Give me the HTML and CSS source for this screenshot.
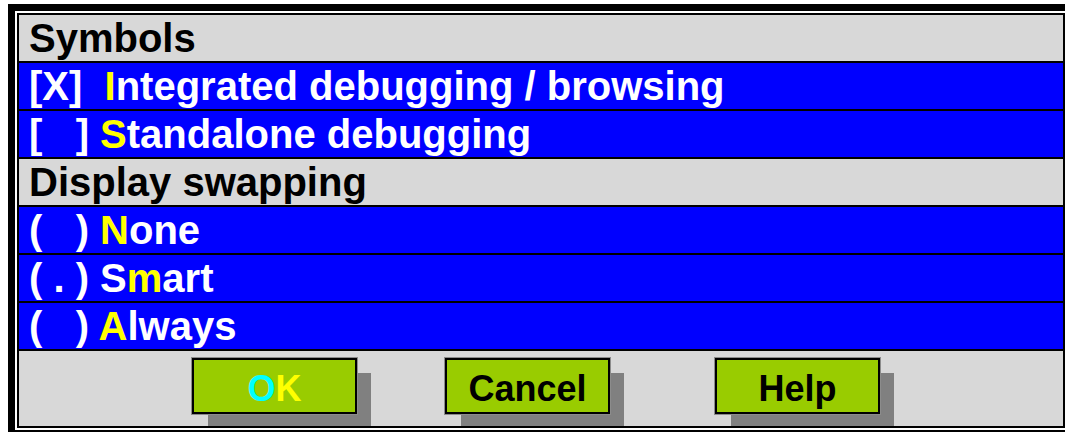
FILE: index.html
```html
<!DOCTYPE html>
<html lang="en">
<head>
<meta charset="utf-8">
<title>Debugger options</title>
<link rel="stylesheet" href="styles.css">
</head>
<body>
<div class="frame">
  <div class="dialog">
    <div class="row group">Symbols</div>
    <div class="row option">[X]  <span class="key">I</span>ntegrated debugging / browsing</div>
    <div class="row option">[   ] <span class="key">S</span>tandalone debugging</div>
    <div class="row group">Display swapping</div>
    <div class="row option">(   ) <span class="key">N</span>one</div>
    <div class="row option">( . ) S<span class="key">m</span>art</div>
    <div class="row option">(   ) <span class="key">A</span>lways</div>
    <div class="buttons">
      <button class="btn btn-ok" type="button"><span class="focus">O</span><span class="key">K</span></button>
      <button class="btn btn-cancel" type="button">Cancel</button>
      <button class="btn btn-help" type="button">Help</button>
    </div>
  </div>
</div>
</body>
</html>
```

FILE: styles.css
```css
html, body {
  margin: 0;
  padding: 0;
  background: #ffffff;
  overflow: hidden;
}

body {
  width: 1065px;
  height: 432px;
  font-family: "Liberation Sans", Arial, sans-serif;
  font-weight: bold;
}

/* double outline: thick black frame, white gap, thin black rule */
.frame {
  margin: 4px 0 0 8px;
  width: 1052px;
  border: 7px solid #000000;
  padding: 2px;
  background: #ffffff;
}

.dialog {
  width: 1044px;
  height: 411px;
  border: 2px solid #000000;
  background: #d8d8d8;
  display: flex;
  flex-direction: column;
}

.row {
  height: 46px;
  line-height: 46px;
  font-size: 40px;
  padding-left: 10px;
  white-space: pre;
  border-bottom: 2px solid #000000;
  flex: none;
}

.group {
  background: #d8d8d8;
  color: #000000;
}

.option {
  background: #0000ff;
  color: #ffffff;
}

.key {
  color: #ffff00;
}

.focus {
  color: #00ffff;
}

.buttons {
  flex: 1;
  display: flex;
  align-items: flex-start;
  padding: 7px 0 0 173px;
  overflow: hidden;
}

.btn {
  box-sizing: border-box;
  width: 165px;
  height: 56px;
  margin: 0;
  padding: 6px 0 0;
  border: 2px solid #000000;
  border-radius: 0;
  background: #99cc00;
  color: #000000;
  font-family: "Liberation Sans", Arial, sans-serif;
  font-weight: bold;
  font-size: 36px;
  line-height: 46px;
  text-align: center;
  box-shadow: 0 0 0 1px #8c8c8c, 15px 14px 0 -1px #808080;
  flex: none;
}

.btn-cancel {
  margin-left: 88px;
}

.btn-help {
  margin-left: 105px;
}
```
